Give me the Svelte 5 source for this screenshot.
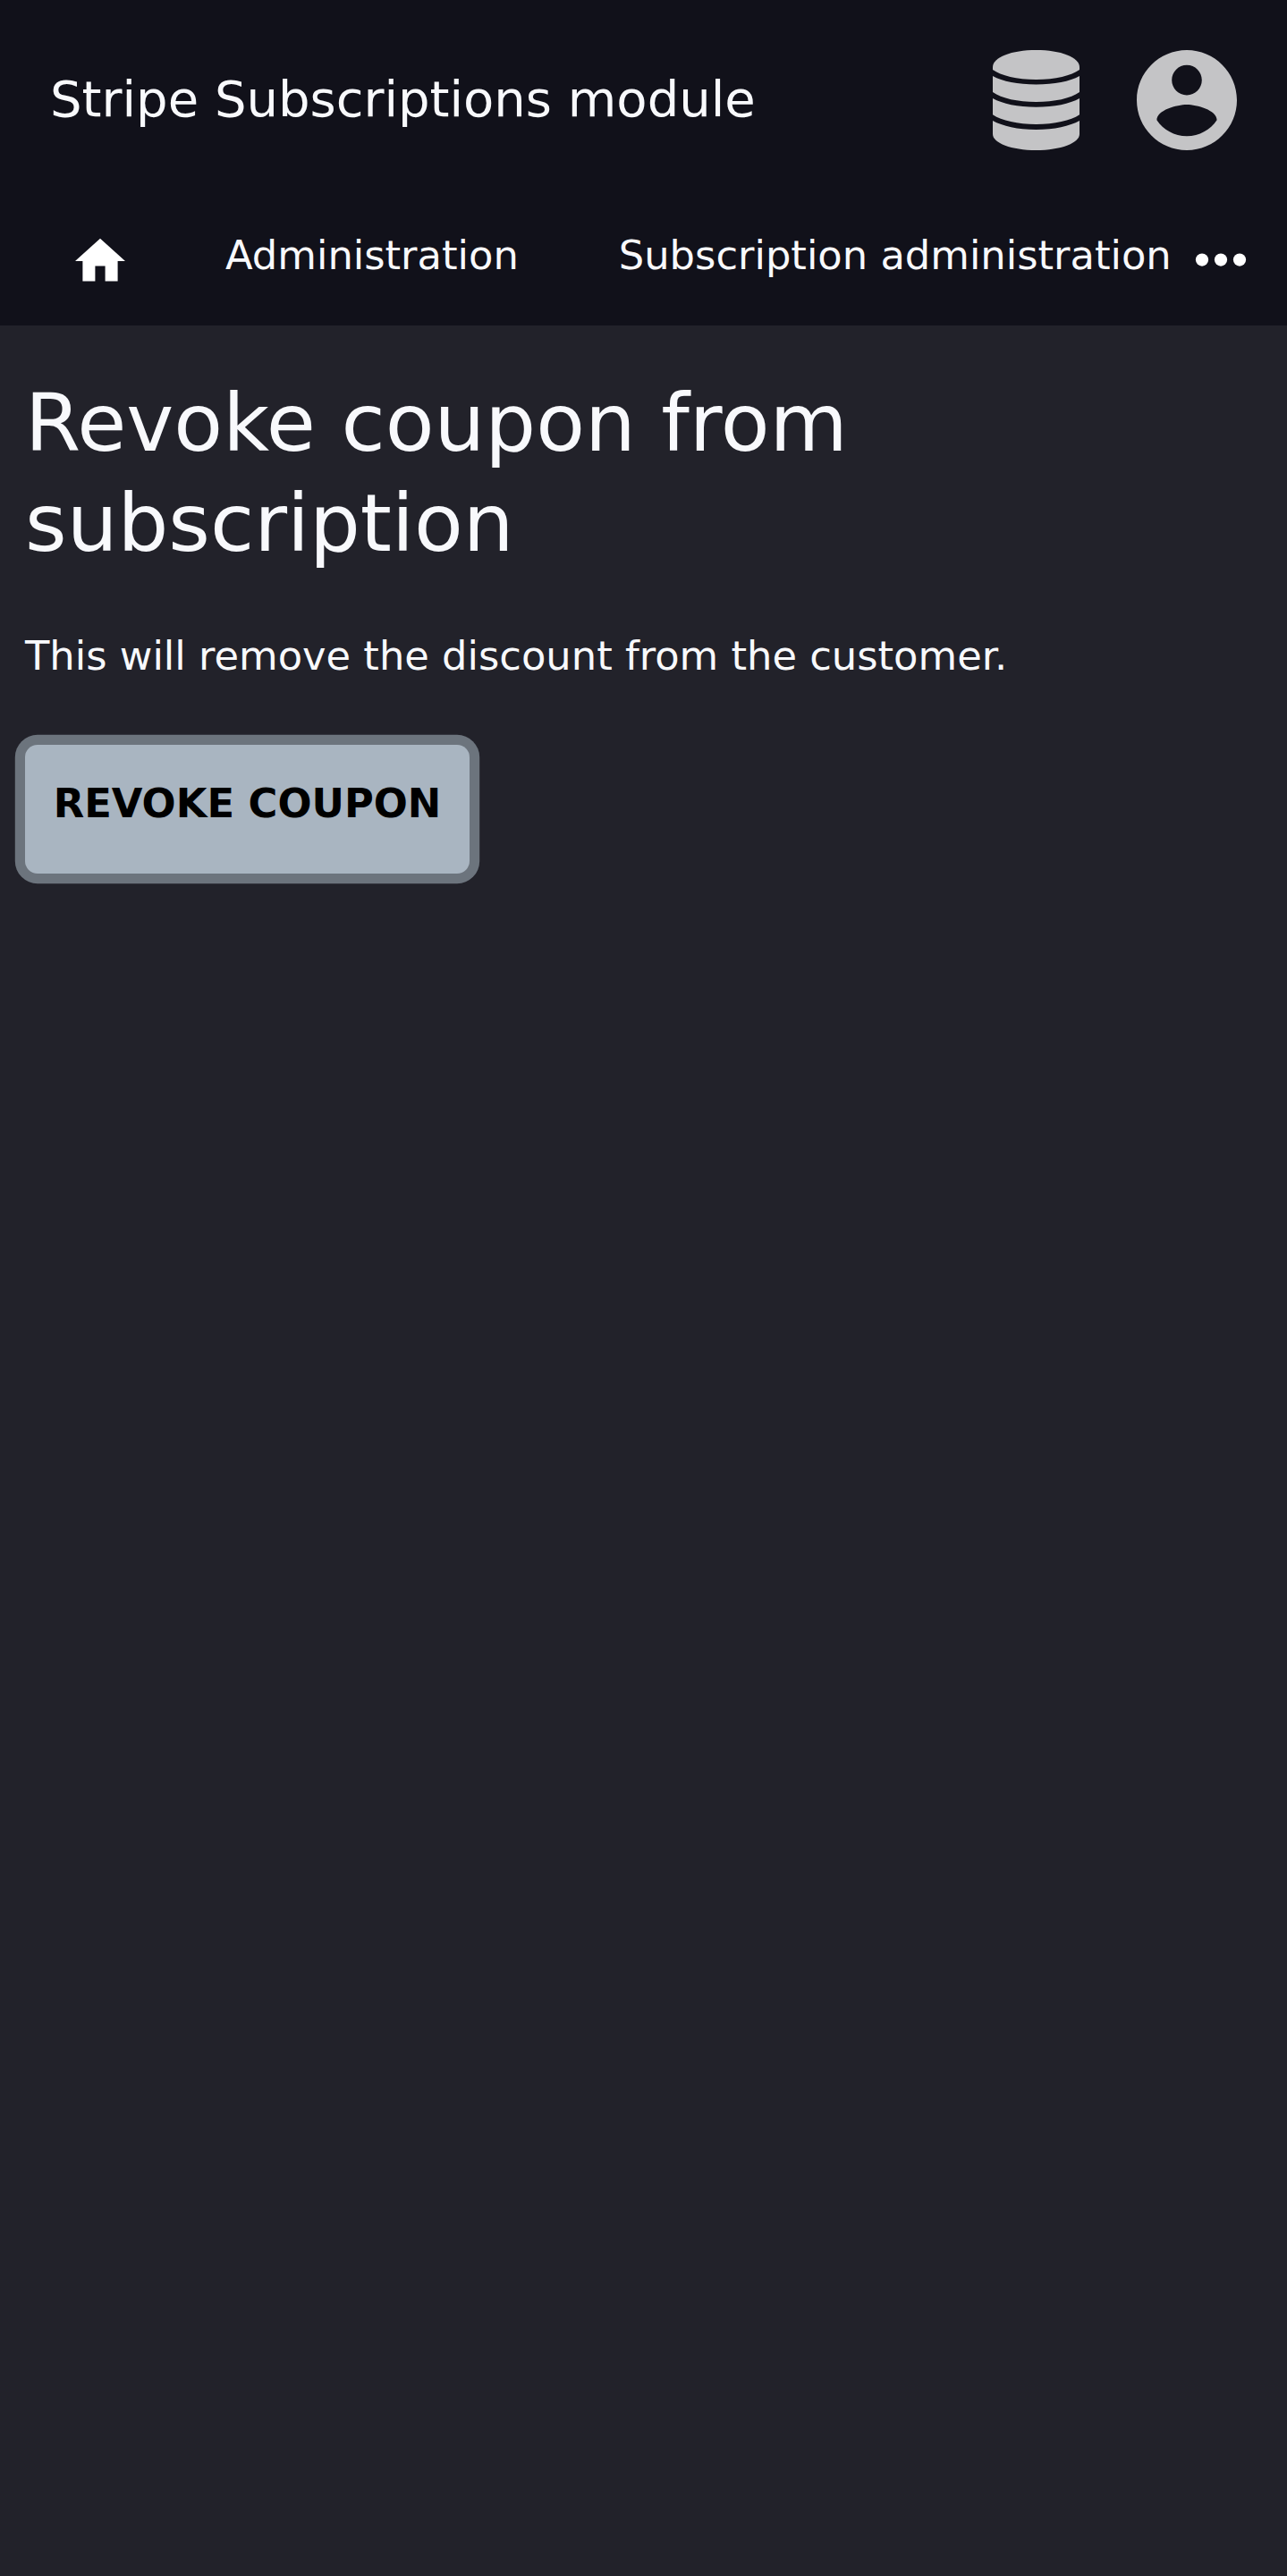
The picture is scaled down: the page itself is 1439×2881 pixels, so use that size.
<script>
  const links = ['Administration', 'Subscription administration'];
</script>

<div class="page">
  <header>
    <div class="bar">
      <div class="title">Stripe Subscriptions module</div>
      <div class="tools">
        <svg class="database" viewBox="0 0 97 112" aria-hidden="true">
          <path d="M0 19C0 8 21 0 48.500 0S97 8 97 19V22C88 28.500 70 33 48.500 33S9 28.500 0 22Z" />
          <path d="M0 29C11 35 28 38.500 48.500 38.500S86 35 97 29V47C87 54 69 58 48.500 58S10 54 0 47Z" />
          <path d="M0 54C11 60 28 63.800 48.500 63.800S86 60 97 54V72.300C87 79 69 83 48.500 83S10 79 0 72.300Z" />
          <path d="M0 79C11 85 28 89 48.500 89S86 85 97 79V94C97 104 76 112 48.500 112S0 104 0 94Z" />
        </svg>
        <svg class="account" viewBox="2 2 20 20" aria-hidden="true">
          <path d="M12 2C6.480 2 2 6.480 2 12s4.480 10 10 10 10-4.480 10-10S17.520 2 12 2zm0 3c1.660 0 3 1.340 3 3s-1.340 3-3 3-3-1.340-3-3 1.340-3 3-3zm0 14.200c-2.500 0-4.710-1.280-6-3.220.030-1.990 4-3.080 6-3.080 1.990 0 5.970 1.090 6 3.080-1.290 1.940-3.500 3.220-6 3.220z" />
        </svg>
      </div>
    </div>
    <nav>
      <svg class="home" viewBox="-0.143 -0.143 24.286 24.286" aria-label="Home">
        <path d="M10 20v-6h4v6h5v-8h3L12 3 2 12h3v8z" />
      </svg>
      {#each links as link}
        <span class="link">{link}</span>
      {/each}
      <svg class="more" viewBox="0 0 56 15" aria-label="More">
        <circle cx="7" cy="7.600" r="7.100" />
        <circle cx="28" cy="7.600" r="7.100" />
        <circle cx="49" cy="7.600" r="7.100" />
      </svg>
    </nav>
  </header>
  <main>
    <h1>Revoke coupon from subscription</h1>
    <p>This will remove the discount from the customer.</p>
    <button>REVOKE COUPON</button>
  </main>
</div>

<style>
  :global(body) {
    margin: 0;
    background: #22222a;
  }
  .page {
    box-sizing: border-box;
    min-height: 2881px;
    background: #22222a;
    color: #f8f9fc;
    font-family: 'DejaVu Sans', sans-serif;
    font-size: 44.8px;
    overflow: hidden;
  }
  header {
    height: 364px;
    background: #11111a;
  }
  .bar {
    display: flex;
    align-items: center;
    justify-content: space-between;
    box-sizing: border-box;
    height: 224px;
    padding: 0 56px;
  }
  .title {
    font-size: 56px;
    line-height: 84px;
    padding-bottom: 3px;
  }
  .tools {
    display: flex;
    gap: 64px;
  }
  .tools svg {
    height: 112px;
    fill: #c4c4c6;
  }
  .database {
    width: 97px;
  }
  .account {
    width: 112px;
  }
  nav {
    display: flex;
    align-items: flex-start;
    box-sizing: border-box;
    height: 140px;
    padding: 28px 46px 0 78px;
  }
  .home {
    width: 68px;
    height: 68px;
    margin: 6px 106px 0 0;
    fill: #fff;
  }
  .link {
    line-height: 67.2px;
    white-space: nowrap;
    margin-right: 112px;
  }
  .link:last-of-type {
    margin-right: 0;
  }
  .more {
    width: 56px;
    height: 15px;
    margin: 31px 0 0 auto;
    fill: #fff;
    overflow: visible;
  }
  main {
    padding: 53px 28px;
  }
  h1 {
    max-width: 1100px;
    margin: 0;
    font-size: 89.6px;
    font-weight: 400;
    line-height: 112px;
  }
  p {
    margin: 59px 0 66px;
    line-height: 67.2px;
  }
  button {
    display: block;
    box-sizing: border-box;
    width: 497px;
    height: 143.400px;
    padding: 0 0 12px;
    border: 0;
    border-radius: 14px;
    background: #a9b5c1;
    box-shadow: 0 0 0 11.2px #6c747d;
    color: #000;
    font: 700 44.8px 'DejaVu Sans', sans-serif;
    white-space: nowrap;
  }
</style>
